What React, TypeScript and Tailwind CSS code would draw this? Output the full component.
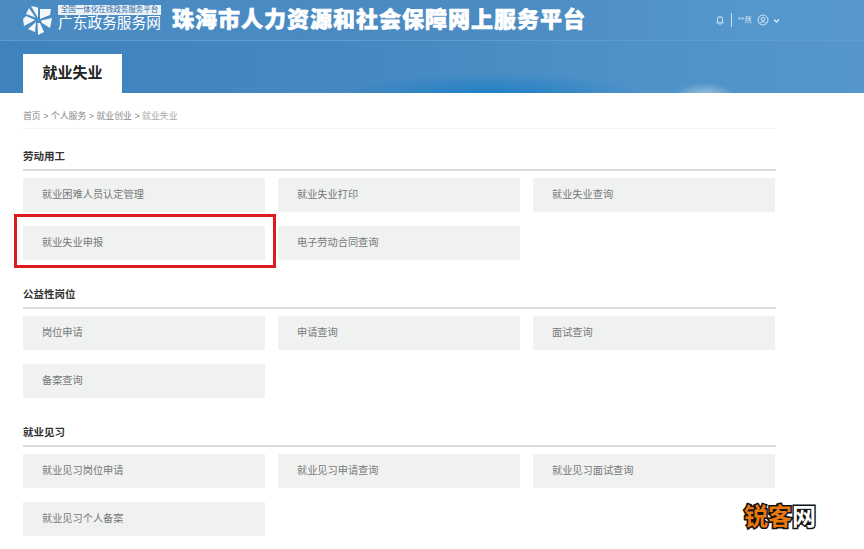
const sections = [
  {
    title: "劳动用工",
    items: ["就业困难人员认定管理", "就业失业打印", "就业失业查询", "就业失业申报", "电子劳动合同查询"],
  },
  {
    title: "公益性岗位",
    items: ["岗位申请", "申请查询", "面试查询", "备案查询"],
  },
  {
    title: "就业见习",
    items: ["就业见习岗位申请", "就业见习申请查询", "就业见习面试查询", "就业见习个人备案"],
  },
];

function Logo() {
  return (
    <svg viewBox="0 0 30 30" className="h-[30px] w-[30px] shrink-0" fill="#f4f8fb">
      <path d="M8 1 L15 2.5 L15 13 Z" />
      <path d="M17 4 L28 4 L27 10 L17 14 Z" />
      <path d="M18 15.5 L29 13 L27 23 L19 18 Z" />
      <path d="M17 18 L21 27 L15 30 L14.5 18 Z" />
      <path d="M13 17 L12 27 L5 24 Z" />
      <path d="M12 15 L1 21 L0 14 L3 11 Z" />
      <path d="M12.5 12.5 L3 9 L6 3 Z" />
    </svg>
  );
}

function TopBar() {
  return (
    <div className="flex h-[41px] items-center border-b border-[#629bcd] pl-[23px] pr-[84px]">
      <Logo />
      <div className="ml-[5px] flex w-[104px] flex-col pb-[3px]">
        <span className="h-[10px] w-[103px] bg-[#e9f0f6] text-center text-[7.500px] leading-[10px] whitespace-nowrap text-[#2f6ea8]">
          全国一体化在线政务服务平台
        </span>
        <span className="h-[17px] whitespace-nowrap text-[14.700px] leading-[17px] text-white">广东政务服务网</span>
      </div>
      <h1 className="ml-[10px] whitespace-nowrap text-[22px] leading-[28px] font-black tracking-[1px] text-white [-webkit-text-stroke:0.6px_white]">
        珠海市人力资源和社会保障网上服务平台
      </h1>
      <div className="ml-auto flex items-center text-[#dcebf6]">
        <svg viewBox="0 0 24 24" className="h-[10px] w-[10px]" fill="none" stroke="currentColor" strokeWidth="2.4">
          <path d="M6 17V10a6 6 0 0 1 12 0v7l2 2H4z" />
          <path d="M10 22h4" />
        </svg>
        <span className="mx-[6px] h-[14px] w-px bg-[#cfe1ef]" />
        <span className="text-[7px] leading-[10px] tracking-[0.5px] whitespace-nowrap">**然</span>
        <svg viewBox="0 0 24 24" className="ml-[5px] h-[12px] w-[12px]" fill="none" stroke="currentColor" strokeWidth="1.8">
          <circle cx="12" cy="12" r="10" />
          <circle cx="12" cy="10" r="3.5" />
          <path d="M6 18c1.5-3 10.500-3 12 0" />
        </svg>
        <svg viewBox="0 0 10 10" className="ml-[4px] h-[7px] w-[7px]" fill="none" stroke="currentColor" strokeWidth="2">
          <path d="M1.500 3.500 L5 7 L8.500 3.500" />
        </svg>
      </div>
    </div>
  );
}

function Section({ title, items }: { title: string; items: string[] }) {
  return (
    <section className="mb-[20px]">
      <h2 className="h-[27px] text-[10.500px] leading-[28px] font-bold text-[#333]">{title}</h2>
      <div className="h-[2px] bg-[#dcdedd]" />
      <div className="mt-[7px] grid grid-cols-[242px_242px_242px] gap-x-[13px] gap-y-[14px]">
        {items.map((item) => (
          <div key={item} className="h-[34px] bg-[#f0f2f2] pl-[19px] text-[10.200px] leading-[34px] text-[#777]">
            {item}
          </div>
        ))}
      </div>
    </section>
  );
}

export default function App() {
  return (
    <div className="relative h-[549px] w-[864px] overflow-hidden bg-white font-['Liberation_Sans','Noto_Sans_CJK_SC',sans-serif]">
      <header className="relative h-[93px] bg-[linear-gradient(90deg,#4a8bc4_0%,#4a8ac2_35%,#4b8cc3_60%,#5497cd_85%,#5698cd_100%)]">
        <div className="absolute inset-x-0 bottom-0 h-[52px] bg-[radial-gradient(ellipse_150px_22px_at_490px_54px,#1f7fc4,transparent),radial-gradient(ellipse_30px_12px_at_705px_54px,#9fc3dd,transparent),linear-gradient(90deg,#3f83be_0%,#4589c2_45%,#4d91c8_70%,#5597cc_100%)]" />
        <div className="relative">
          <TopBar />
          <div className="mt-[13px] ml-[23px] h-[39px] w-[99px] bg-white text-center text-[15px] leading-[38px] font-bold text-[#222]">
            就业失业
          </div>
        </div>
      </header>

      <main className="w-[753px] pl-[23px] box-content">
        <div className="h-[36px] border-b border-[#f3f4f4] pt-[15px] text-[8.900px] leading-[16px] text-[#888]">
          首页 &gt; 个人服务 &gt; 就业创业 &gt; <span className="text-[#aaa]">就业失业</span>
        </div>
        <div className="mt-[13px]">
          {sections.map((s) => (
            <Section key={s.title} title={s.title} items={s.items} />
          ))}
        </div>
      </main>

      {/* red annotation drawn over the screenshot */}
      <div className="absolute top-[214px] left-[14px] h-[54px] w-[262px] border-[3px] border-[#dd1a1f]" />

      <div className="absolute top-[504px] left-[744px] text-[24px] leading-[26px] font-bold whitespace-nowrap [-webkit-text-stroke:3px_#111] [paint-order:stroke_fill]">
        <span className="text-[#e8790f]">锐客</span>
        <span className="text-white">网</span>
      </div>
    </div>
  );
}
